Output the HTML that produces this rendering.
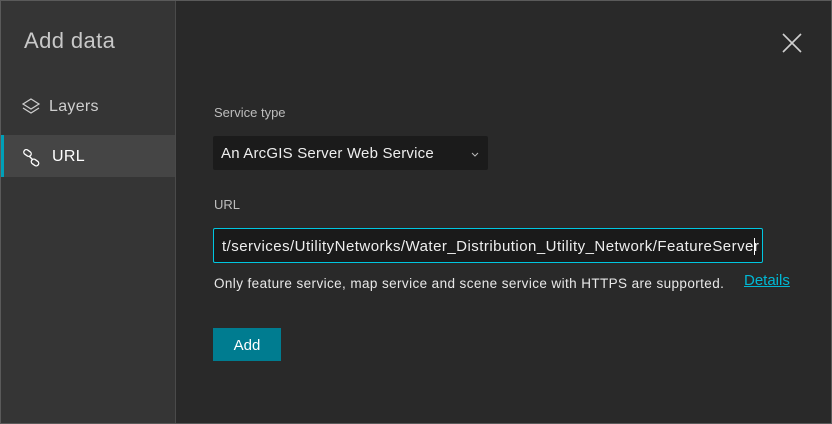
<!DOCTYPE html>
<html><head><style>
*{margin:0;padding:0;box-sizing:border-box}
body{width:832px;height:424px;background:#292929;font-family:"Liberation Sans",sans-serif;overflow:hidden;position:relative}
.frame{position:absolute;inset:0;border:1px solid #5a5a5a}
.side{position:absolute;left:1px;top:1px;width:175px;height:422px;background:#353535;border-right:1px solid #4a4a4a}
.title{position:absolute;left:23px;top:27px;font-size:22px;color:#c8c8c8;letter-spacing:0.4px}
.item{position:absolute;left:0;width:174px;height:42px;font-size:16px;color:#cfcfcf;letter-spacing:0.3px}
.item span{position:absolute;left:48px;top:13px}
.sel{background:#454545;color:#fff;border-left:3px solid #00a0b8}
.lbl{position:absolute;left:214px;font-size:13px;color:#bdbdbd}
.sel2{position:absolute;left:213px;top:136px;width:275px;height:34px;background:#1b1b1b;border-radius:2px;color:#eee;font-size:15px;padding:9px 0 0 8px;letter-spacing:0.2px}
.inp{position:absolute;left:213px;top:228px;width:550px;height:35px;background:#1a1a1a;border:1px solid #00c6e0;border-radius:2px;color:#eee;font-size:15px;padding:9px 0 0 8px;white-space:nowrap;overflow:hidden;letter-spacing:0.47px}
.help{position:absolute;left:214px;top:276px;font-size:13.5px;color:#e8e8e8;letter-spacing:0.4px}
.det{position:absolute;left:744px;top:272px;font-size:15px;color:#00b8d4;text-decoration:underline}
.btn{position:absolute;left:213px;top:328px;width:68px;height:33px;background:#007c90;color:#fff;font-size:15px;text-align:center;line-height:35px}
</style></head><body>
<div class="frame"></div>
<div class="side">
<div class="title">Add data</div>
<div class="item" style="top:84px"><svg style="position:absolute;left:20px;top:13px" width="20" height="18" viewBox="0 0 20 18" fill="none" stroke="#cfcfcf" stroke-width="1.2"><path d="M10 1L18 6L10 11L2 6Z"/><path d="M2 10L10 15L18 10"/></svg><span>Layers</span></div>
<div class="item sel" style="top:134px"><svg style="position:absolute;left:18px;top:13px" width="20" height="20" viewBox="0 0 20 20" fill="none" stroke="#fff" stroke-width="1.3"><rect x="1.5" y="2.5" width="8" height="5" rx="2.5" transform="rotate(35 5.5 5)"/><rect x="9" y="12" width="8" height="5" rx="2.5" transform="rotate(35 13 14.5)"/><path d="M7 8L11 12"/></svg><span>URL</span></div>
</div>
<svg style="position:absolute;left:782px;top:33px" width="20" height="20" viewBox="0 0 20 20" stroke="#cfcfcf" stroke-width="1.6"><path d="M1 1L19 19M19 1L1 19"/></svg>
<div class="lbl" style="top:105px">Service type</div>
<div class="sel2">An ArcGIS Server Web Service<svg style="position:absolute;left:258px;top:16px" width="8" height="5" viewBox="0 0 8 5" fill="none" stroke="#bbb"><path d="M1 1L4 4L7 1"/></svg></div>
<div class="lbl" style="top:197px">URL</div>
<div class="inp">t/services/UtilityNetworks/Water_Distribution_Utility_Network/FeatureServe<span style="border-left:1px solid #fff;margin:0 -1px 0 0"></span>r</div>
<div class="help">Only feature service, map service and scene service with HTTPS are supported.</div>
<div class="det">Details</div>
<div class="btn">Add</div>
</body></html>
